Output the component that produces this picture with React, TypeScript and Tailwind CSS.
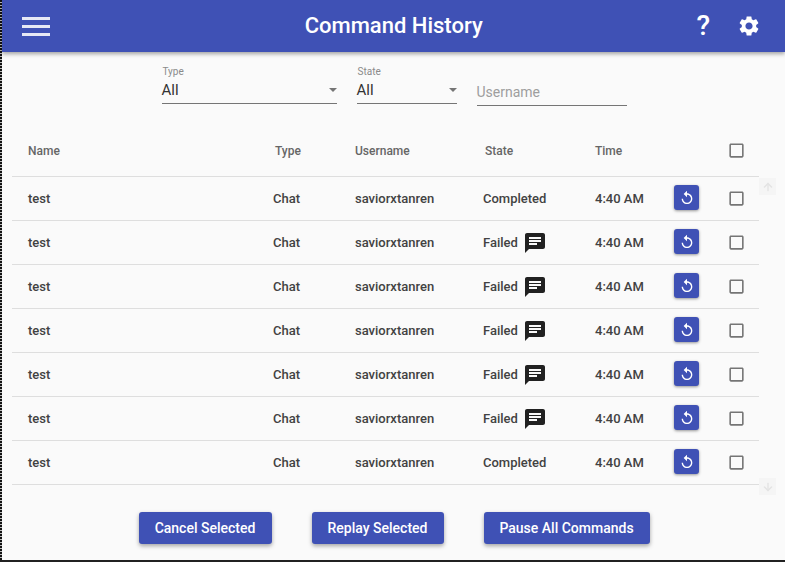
import { ArrowDown, ArrowUp } from "lucide-react"

type Row = {
  state: "Completed" | "Failed"
}

const rows: Row[] = [
  { state: "Completed" },
  { state: "Failed" },
  { state: "Failed" },
  { state: "Failed" },
  { state: "Failed" },
  { state: "Failed" },
  { state: "Completed" },
]

const gridCols = "grid grid-cols-[245px_82px_128px_112px_79px_55px_14px] items-center pl-4"

function Icon({ d, className }: { d: string; className?: string }) {
  return (
    <svg viewBox="0 0 24 24" fill="currentColor" className={className}>
      <path d={d} />
    </svg>
  )
}

const paths = {
  settings:
    "M19.14 12.94c.04-.3.06-.61.06-.94 0-.32-.02-.64-.07-.94l2.03-1.58c.18-.14.23-.41.12-.61l-1.92-3.32c-.12-.22-.37-.29-.59-.22l-2.39.96c-.5-.38-1.03-.7-1.62-.94l-.36-2.54c-.04-.24-.24-.41-.48-.41h-3.84c-.24 0-.43.17-.47.41l-.36 2.54c-.59.24-1.13.57-1.62.94l-2.39-.96c-.22-.08-.47 0-.59.22L2.74 8.87c-.12.21-.08.47.12.61l2.03 1.58c-.05.3-.09.63-.09.94s.02.64.07.94l-2.03 1.58c-.18.14-.23.41-.12.61l1.92 3.32c.12.22.37.29.59.22l2.39-.96c.5.38 1.03.7 1.62.94l.36 2.54c.05.24.24.41.48.41h3.84c.24 0 .44-.17.47-.41l.36-2.54c.59-.24 1.13-.56 1.62-.94l2.39.96c.22.08.47 0 .59-.22l1.92-3.32c.12-.22.07-.47-.12-.61l-2.01-1.58zM12 15.6c-1.98 0-3.6-1.62-3.6-3.6s1.62-3.6 3.6-3.6 3.6 1.62 3.6 3.6-1.62 3.6-3.6 3.6z",
  chat: "M20 2H4c-1.1 0-1.99.9-1.99 2L2 22l4-4h14c1.1 0 2-.9 2-2V4c0-1.1-.9-2-2-2zM6 9h12v2H6V9zm8 5H6v-2h8v2zm4-6H6V6h12v2z",
  replay:
    "M12 5V1L7 6l5 5V7c3.31 0 6 2.69 6 6s-2.69 6-6 6-6-2.69-6-6H4c0 4.42 3.58 8 8 8s8-3.58 8-8-3.58-8-8-8z",
  checkbox:
    "M19 5v14H5V5h14m0-2H5c-1.1 0-2 .9-2 2v14c0 1.1.9 2 2 2h14c1.1 0 2-.9 2-2V5c0-1.1-.9-2-2-2z",
}

function Checkbox() {
  return <Icon d={paths.checkbox} className="-mx-[2.5px] -mb-[2px] -mt-[3px] h-[19px] w-[19px] text-[#757575]" />
}

function SelectField({ label, width }: { label: string; width: string }) {
  return (
    <div className={`relative h-[38px] ${width} border-b border-[#757575]`}>
      <div className="pl-[1px] text-[10px] leading-[12px] text-[#8a8a8a]">{label}</div>
      <div className="text-[15px] leading-[24px] text-[#333]">All</div>
      <div className="absolute right-0 top-[22px] h-0 w-0 border-x-[4px] border-t-[4px] border-x-transparent border-t-[#757575]" />
    </div>
  )
}

function ActionButton({ label, width }: { label: string; width: string }) {
  return (
    <button
      type="button"
      className={`h-8 ${width} rounded-[3px] bg-[#3f51b5] text-[14px] font-medium text-white shadow-[0_2px_4px_rgba(0,0,0,0.35)]`}
    >
      {label}
    </button>
  )
}

export default function App() {
  return (
    <div className="flex h-[562px] w-[785px] overflow-hidden bg-[#212121] pb-[2px] font-['Roboto',sans-serif]">
      <div className="w-[2px] shrink-0 bg-[repeating-linear-gradient(to_bottom,#111_0px,#111_2px,#bbb_2px,#bbb_3px)]" />
      <div className="flex h-full flex-1 flex-col bg-[#fafafa]">
        <header className="z-10 flex h-[52px] shrink-0 items-center bg-[#3f51b5] pl-5 pr-6 text-white shadow-[0_2px_4px_rgba(0,0,0,0.35)]">
          <div className="flex w-7 flex-col gap-[5px]">
            <div className="h-[3px] bg-[#e6e8f5]" />
            <div className="h-[3px] bg-[#e6e8f5]" />
            <div className="h-[3px] bg-[#e6e8f5]" />
          </div>
          <h1 className="flex-1 pb-[2px] pl-[41px] text-center text-[22px] font-medium">Command History</h1>
          <div className="mr-[27px] text-[28px] font-medium leading-none">?</div>
          <Icon d={paths.settings} className="h-6 w-6" />
        </header>

        <div className="flex items-start justify-center gap-5 pl-[1px] pt-[14px]">
          <SelectField label="Type" width="w-[175px]" />
          <SelectField label="State" width="w-[100px]" />
          <div className="flex h-[40px] w-[150px] items-end border-b border-[#757575] pb-[2px] text-[14px] text-[#9e9e9e]">
            Username
          </div>
        </div>

        <div className="relative ml-[10px] mt-[17px] w-[747px] text-[13px]">
          <div className={`${gridCols} h-[54px] border-b border-[#dedede] pt-[3px] text-[12px] font-medium text-[#666]`}>
            <span>Name</span>
            <span className="pl-[2px]">Type</span>
            <span>Username</span>
            <span className="pl-[2px]">State</span>
            <span>Time</span>
            <span />
            <Checkbox />
          </div>
          {rows.map((row, i) => (
            <div
              key={i}
              className={`${gridCols} h-11 border-b border-[#dedede] font-medium text-[#424242]`}
            >
              <span>test</span>
              <span>Chat</span>
              <span>saviorxtanren</span>
              <span className="flex items-center">
                {row.state}
                {row.state === "Failed" && (
                  <Icon d={paths.chat} className="ml-[5px] h-6 w-6 text-[#212121]" />
                )}
              </span>
              <span>4:40 AM</span>
              <button
                type="button"
                className="mb-[2px] flex h-[25px] w-[25px] items-center justify-center rounded-[3px] bg-[#3f51b5] text-white shadow-[0_1px_3px_rgba(0,0,0,0.4)]"
              >
                <Icon d={paths.replay} className="h-4 w-4" />
              </button>
              <Checkbox />
            </div>
          ))}
          <div className="absolute left-[747px] top-[55px] flex h-[17px] w-[17px] items-center justify-center bg-[#f5f5f5] text-[#e4e4e4]">
            <ArrowUp className="h-3 w-3" strokeWidth={3} />
          </div>
          <div className="absolute left-[747px] top-[355px] flex h-[17px] w-[17px] items-center justify-center bg-[#f5f5f5] text-[#e4e4e4]">
            <ArrowDown className="h-3 w-3" strokeWidth={3} />
          </div>
        </div>

        <div className="mt-[27px] flex justify-center gap-10 pl-[1px]">
          <ActionButton label="Cancel Selected" width="w-[133px]" />
          <ActionButton label="Replay Selected" width="w-[132px]" />
          <ActionButton label="Pause All Commands" width="w-[166px]" />
        </div>
      </div>
    </div>
  )
}
